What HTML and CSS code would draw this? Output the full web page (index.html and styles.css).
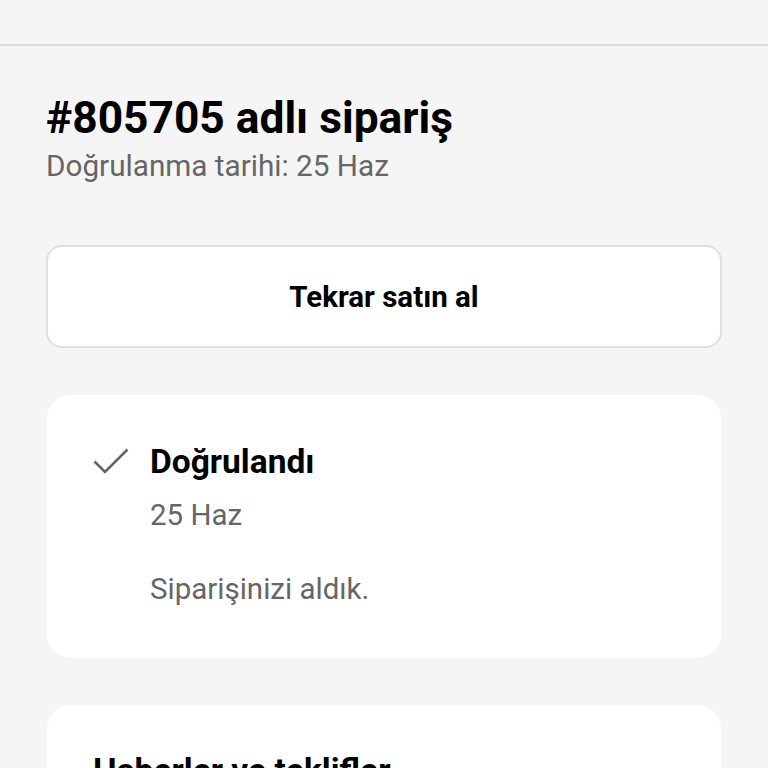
FILE: index.html
```html
<!DOCTYPE html>
<html lang="tr">
<head>
<meta charset="utf-8">
<link rel="stylesheet" href="styles.css">
</head>
<body>
<div class="topbar"></div>
<main class="page">
  <header class="head">
    <h1 class="title">#805705 adlı sipariş</h1>
    <p class="subtitle">Doğrulanma tarihi: 25 Haz</p>
  </header>
  <button class="rebuy">Tekrar satın al</button>
  <section class="card status">
    <svg class="check" viewBox="0 0 36 26" width="36" height="26"><path d="M1.5 13.5 L12 24 L34.5 1.5" fill="none" stroke="#666" stroke-width="2.6"/></svg>
    <div class="status-body">
      <h2 class="status-title">Doğrulandı</h2>
      <p class="status-date">25 Haz</p>
      <p class="status-text">Siparişinizi aldık.</p>
    </div>
  </section>
  <section class="card news">
    <h2 class="news-title">Haberler ve teklifler</h2>
  </section>
</main>
</body>
</html>
```
FILE: styles.css
```css
html, body {
  margin: 0;
  padding: 0;
  background: #f5f5f5;
  font-family: Roboto, "Noto Sans", sans-serif;
  color: #000;
}
.topbar {
  height: 44px;
  border-bottom: 2px solid #dcdcdc;
}
.page {
  padding: 0 46px;
  display: flex;
  flex-direction: column;
}
.head {
  padding-top: 46px;
}
.title {
  margin: 0;
  font-size: 44.3px;
  font-weight: 700;
  line-height: 52px;
}
.subtitle {
  margin: 4px 0 0;
  font-size: 29.7px;
  line-height: 36px;
  color: #666;
}
.rebuy {
  margin-top: 61px;
  height: 103px;
  background: #fff;
  border: 2px solid #e0e0e0;
  border-radius: 16px;
  font-family: Roboto, "Noto Sans", sans-serif;
  font-size: 29.5px;
  font-weight: 700;
  color: #000;
  padding: 0;
}
.card {
  background: #fff;
  border-radius: 24px;
  margin-left: 1px;
  margin-right: 1px;
}
.status {
  margin-top: 47px;
  height: 263px;
  display: flex;
  padding: 0 0 0 46px;
  box-sizing: border-box;
}
.check {
  margin-top: 53px;
  margin-right: 21px;
  flex: none;
}
.status-body {
  padding-top: 45px;
}
.status-title {
  margin: 0;
  font-size: 33.5px;
  font-weight: 700;
  line-height: 44px;
}
.status-date {
  margin: 13px 0 0;
  font-size: 29.5px;
  line-height: 36px;
  color: #666;
}
.status-text {
  margin: 38px 0 0;
  font-size: 29.5px;
  line-height: 36px;
  color: #666;
}
.news {
  margin-top: 47px;
  height: 200px;
  padding: 44px 46px 0;
}
.news-title {
  margin: 0;
  font-size: 33.5px;
  font-weight: 700;
  line-height: 44px;
}
```
